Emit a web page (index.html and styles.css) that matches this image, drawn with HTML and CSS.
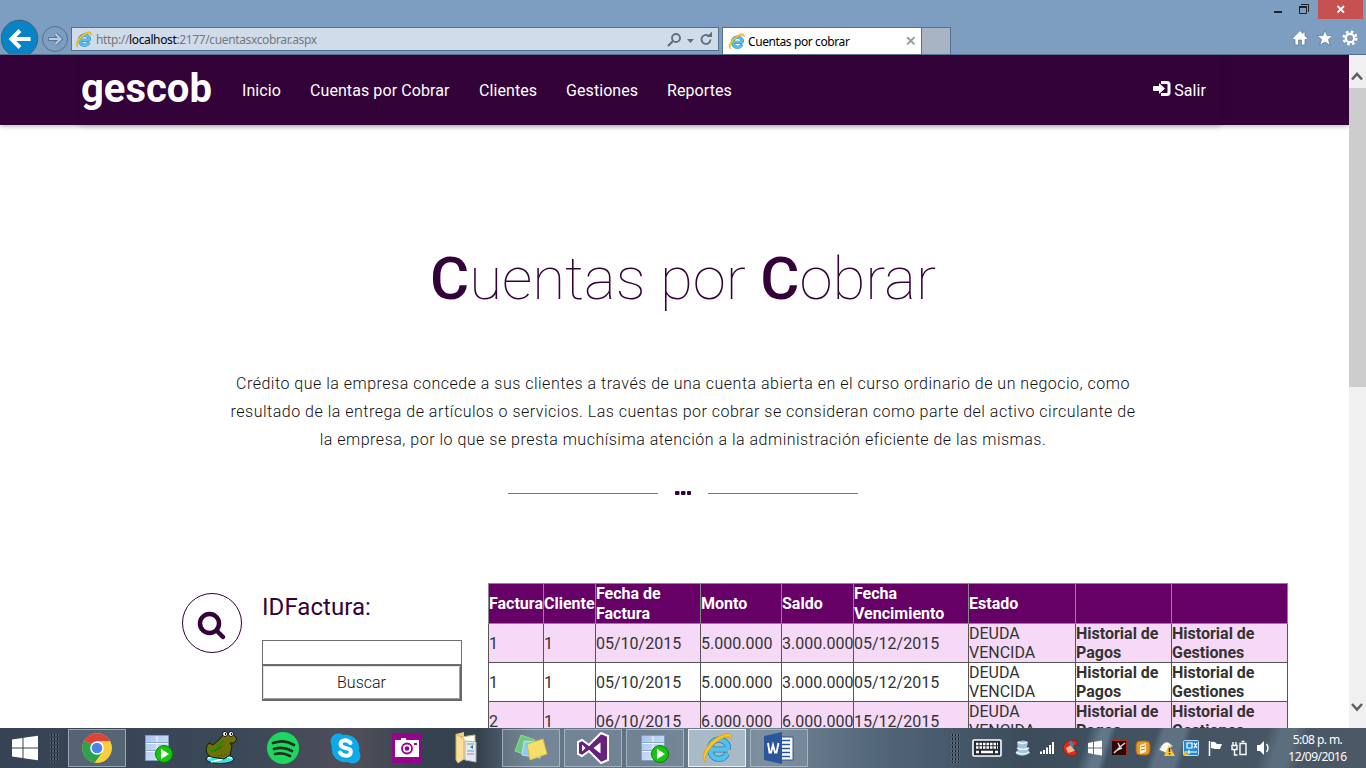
FILE: index.html
```html
<!DOCTYPE html>
<html lang="es">
<head>
<meta charset="utf-8">
<title>Cuentas por cobrar</title>
<link rel="stylesheet" href="styles.css">
</head>
<body>
<svg width="0" height="0" class="defs">
  <defs>
    <linearGradient id="sheet" x1="0" y1="0" x2="1" y2="1"><stop offset="0" stop-color="#a9c3ec"/><stop offset="1" stop-color="#dfe8f6"/></linearGradient>
    <symbol id="ie" viewBox="0 0 32 32">
      <path d="M27 17.500H10M26 21.500C23 28.500 12.500 29 9.500 20.500C7 10.500 14.500 6.500 20 8C25.500 9.500 27.500 13 27 17.500" fill="none" stroke="#217fb5" stroke-width="6"/>
      <path d="M27 17.500H10M26 21.500C23 28.500 12.500 29 9.500 20.500C7 10.500 14.500 6.500 20 8C25.500 9.500 27.500 13 27 17.500" fill="none" stroke="#56c0ec" stroke-width="4.600"/>
      <path d="M5 30.500C-3 26 7 9 19 4C25 .5 32 0 30.500 7.500C28.500 3.500 24 4.500 19 7.500C9 14 2.500 24 5 30.500Z" fill="#f8c421" stroke="#dc9d13" stroke-width=".8"/>
    </symbol>
    <symbol id="db" viewBox="0 0 30 30">
      <path d="M1.500 2.500h23v25h-23z" fill="url(#sheet)" stroke="#7c9bd0"/>
      <path d="M2 10.500h22M2 18.500h22M13 3v24" stroke="#f4f7fc"/><path d="M2 9.500h22M2 17.500h22" stroke="#8ba9d8"/>
      <circle cx="20" cy="21" r="8.500" fill="#16c60c" stroke="#0b7d08"/><path d="M17 15.800v10.400l8-5.200z" fill="#fff"/>
    </symbol>
  </defs>
</svg>

<header class="browser">
  <div class="caption">
    <div class="cap min"><svg width="10" height="19"><path d="M1 12h8" stroke="#222" stroke-width="2"/></svg></div>
    <div class="cap max"><svg width="12" height="19"><path d="M3 4.500h7.500V12" fill="none" stroke="#222"/><path d="M1.500 7.500h7v6h-7z" fill="none" stroke="#222"/><path d="M1 7h8" stroke="#222" stroke-width="2"/></svg></div>
    <div class="cap close"><svg width="10" height="19"><path d="M1.500 6l6.500 6.500M8 6l-6.500 6.500" stroke="#fff" stroke-width="1.800"/></svg></div>
  </div>
  <div class="tools">
    <svg class="back" width="38" height="35"><circle cx="18.500" cy="19.500" r="18.300" fill="#0784c7" stroke="#456078"/><path d="M29.500 20H12M19 11.500L10.500 20l8.500 8.500" fill="none" stroke="#fff" stroke-width="4"/></svg>
    <svg class="forward" width="28" height="35"><circle cx="14" cy="20" r="12.500" fill="none" stroke="#53708d"/><path d="M7 20h11.500M14.500 15l5 5-5 5" fill="none" stroke="#5a7797" stroke-width="4"/><path d="M8 20h11M14.500 15l5 5-5 5" fill="none" stroke="#b9cbe0" stroke-width="2"/></svg>
    <div class="address">
      <svg width="17" height="17"><use href="#ie"/></svg>
      <span class="url">http://<b>localhost</b>:2177/cuentasxcobrar.aspx</span>
      <svg width="50" height="20" class="addricons"><circle cx="11" cy="9" r="4" fill="none" stroke="#626e7b" stroke-width="1.800"/><path d="M8 12l-5 5" stroke="#626e7b" stroke-width="2.200"/><path d="M22 10h7l-3.500 4z" fill="#626e7b"/><path d="M45.500 10.500a4.500 4.500 0 1 1-2-3.800" fill="none" stroke="#626e7b" stroke-width="1.800"/><path d="M41.500 8l5.500 0V2.500z" fill="#626e7b"/></svg>
    </div>
    <div class="tab"><svg width="17" height="17"><use href="#ie"/></svg><span>Cuentas por cobrar</span><svg width="10" height="10"><path d="M1.200 1.200l7.200 7.200M8.400 1.200L1.200 8.400" stroke="#9d9d9d" stroke-width="2"/></svg></div>
    <div class="newtab"></div>
    <div class="favs">
      <svg width="16" height="16"><path d="M8 .6L.5 8.300l1 1.200H3V15h3.500v-5h3v5H13V9.500h1.500l1-1.200-2.500-2.500V2h-2v1.500z" fill="#fff" stroke="#587694" stroke-width=".7"/></svg>
      <svg width="18" height="16"><path d="M9 .3l2.100 5.300 6 .1-4.700 3.700 1.900 6L9 12l-5.300 3.400 1.900-6L.9 5.700l6-.1z" fill="#fff" stroke="#587694" stroke-width=".7"/></svg>
      <svg width="16" height="16"><circle cx="8" cy="8" r="4.200" fill="none" stroke="#fff" stroke-width="2.200"/><circle cx="8" cy="8" r="6.300" fill="none" stroke="#fff" stroke-width="2.500" stroke-dasharray="2.600 2.348"/></svg>
    </div>
  </div>
</header>

<div class="viewport">
  <div class="page">
    <nav class="nav">
      <div class="container">
        <a class="brand">gescob</a>
        <a class="n1">Inicio</a><a class="n2">Cuentas por Cobrar</a><a class="n3">Clientes</a><a class="n4">Gestiones</a><a class="n5">Reportes</a>
        <a class="exit"><svg width="18" height="16"><path d="M8 1.500h6Q16 1.500 16 3.500v8q0 2-2 2H8" fill="none" stroke="#fff" stroke-width="3"/><path d="M1 5h5V2l6 5.500L6 13v-3H1Q0 10 0 9V6q0-1 1-1z" fill="#fff"/></svg>Salir</a>
      </div>
    </nav>
    <h1><b>C</b>uentas por <b>C</b>obrar</h1>
    <div class="intro">
      <p>Crédito que la empresa concede a sus clientes a través de una cuenta abierta en el curso ordinario de un negocio, como</p>
      <p>resultado de la entrega de artículos o servicios. Las cuentas por cobrar se consideran como parte del activo circulante de</p>
      <p>la empresa, por lo que se presta muchísima atención a la administración eficiente de las mismas.</p>
    </div>
    <div class="divider"><i></i><svg width="16" height="4"><rect width="4.500" height="4" rx="1"/><rect x="6" width="4.500" height="4" rx="1"/><rect x="12" width="4" height="4" rx="1"/></svg><i></i></div>
    <div class="content">
      <div class="round"><svg width="30" height="30"><circle cx="12.500" cy="12.500" r="9.500" fill="none" stroke="#330239" stroke-width="4.500"/><path d="M19.500 19.500l6.500 6.500" stroke="#330239" stroke-width="4.500" stroke-linecap="round"/></svg></div>
      <div class="search"><h2>IDFactura:</h2><input type="text"><button>Buscar</button></div>
      <table>
        <colgroup><col class="c1"><col class="c2"><col class="c3"><col class="c4"><col class="c5"><col class="c6"><col class="c7"><col class="c8"><col class="c9"></colgroup>
        <tr><th>Factura</th><th>Cliente</th><th>Fecha de Factura</th><th>Monto</th><th>Saldo</th><th>Fecha Vencimiento</th><th>Estado</th><th></th><th></th></tr>
        <tr class="alt"><td>1</td><td>1</td><td>05/10/2015</td><td>5.000.000</td><td>3.000.000</td><td>05/12/2015</td><td>DEUDA VENCIDA</td><td><b>Historial de Pagos</b></td><td><b>Historial de Gestiones</b></td></tr>
        <tr><td>1</td><td>1</td><td>05/10/2015</td><td>5.000.000</td><td>3.000.000</td><td>05/12/2015</td><td>DEUDA VENCIDA</td><td><b>Historial de Pagos</b></td><td><b>Historial de Gestiones</b></td></tr>
        <tr class="alt"><td>2</td><td>1</td><td>06/10/2015</td><td>6.000.000</td><td>6.000.000</td><td>15/12/2015</td><td>DEUDA VENCIDA</td><td><b>Historial de Pagos</b></td><td><b>Historial de Gestiones</b></td></tr>
      </table>
    </div>
  </div>
  <div class="scroll">
    <svg width="17" height="33"><path d="M3 24.500l5-5.500 5 5.500" fill="none" stroke="#606060" stroke-width="2.600"/></svg>
    <div class="thumb"></div>
    <svg width="17" height="33" class="down"><path d="M3 9l5 5.500L13 9" fill="none" stroke="#606060" stroke-width="2.600"/></svg>
  </div>
</div>

<footer class="taskbar">
  <div class="start"><svg width="28" height="26"><path d="M1 4.500l10.500-1.500v9.500H1zM12.500 2.800L27 .8v11.700H12.500zM1 13.500h10.500V23L1 21.500zM12.500 13.500H27v11.700l-14.500-2z" fill="#fff"/></svg></div>
  <div class="grip"></div>
  <div class="apps">
    <div class="app open"><svg width="30" height="30" viewBox="0 0 30 30"><circle cx="15" cy="15" r="14.700" fill="#fbcf3c"/><path d="M15 15L2.300 7.600A14.700 14.700 0 0 0 13 29.600L21.500 18z" fill="#2ba24b"/><path d="M15 15L2.300 7.600A14.700 14.700 0 0 1 28.200 8.500H15z" fill="#db4437"/><path d="M15 8.300h13.100a14.700 14.700 0 0 1-15.200 21.300L21 18.500z" fill="#fbcf3c"/><circle cx="15" cy="15" r="6.800" fill="#fff"/><circle cx="15" cy="15" r="5.300" fill="#4a82ee"/></svg></div>
    <div class="app"><svg width="30" height="30"><use href="#db"/></svg></div>
    <div class="app"><svg width="34" height="34" viewBox="0 0 34 34"><ellipse cx="16" cy="28" rx="14" ry="4.500" fill="#32e6ee" stroke="#111"/><path d="M4 27l12-2 12 2M7 31l12-3" stroke="#fff" stroke-width="1.500"/><path d="M7 26Q0 22 3 15l2-3 4 2 8-7 3-5 9 1 4 5-3 4h-4l2 3-2 9-6 4z" fill="#6c7108" stroke="#171c03"/><path d="M6 20q8 0 9-6l5-4" stroke="#188c15" stroke-width="2" fill="none"/><path d="M11 20l8-5M14 25l9-2" stroke="#252903" stroke-dasharray="1 2"/><circle cx="21" cy="3" r="2.500" fill="#fff" stroke="#111"/><circle cx="27" cy="3" r="2.500" fill="#fff" stroke="#111"/><path d="M21 3h1M27 3h1" stroke="#111" stroke-width="2"/></svg></div>
    <div class="app"><svg width="32" height="32"><circle cx="16" cy="16" r="16" fill="#1ed760"/><path d="M6 11q11-4 21 2M7 17q9-3 18 2M8 22q8-2 15 2" fill="none" stroke="#19331f" stroke-width="2.700" stroke-linecap="round"/></svg></div>
    <div class="app"><svg width="31" height="31"><circle cx="15.500" cy="15.500" r="13.800" fill="#0caae9"/><circle cx="8.500" cy="8.500" r="8" fill="#0caae9"/><circle cx="22.500" cy="22.500" r="8" fill="#0caae9"/><path d="M20.500 10Q18.500 7.200 15 7.200C9 8 9.500 13.500 14.500 14.800C20.500 16 21.500 17 20.500 20.500C18.500 24 12 23 10 19.500" fill="none" stroke="#fff" stroke-width="4" stroke-linecap="round"/></svg></div>
    <div class="app"><svg width="30" height="30"><path d="M0 0h30v30H0z" fill="#96038c"/><path d="M3 7h6V5h5v2h13v17H3z" fill="#fff"/><circle cx="15" cy="15.500" r="5" fill="none" stroke="#96038c" stroke-width="1.800"/><circle cx="15" cy="15.500" r="2.300" fill="#96038c"/><path d="M22 11h3" stroke="#96038c" stroke-width="2"/></svg></div>
    <div class="app folder"><svg width="28" height="32"><path d="M3 2l8-2v24l-7 5H3z" fill="#f0d184"/><path d="M8 5l14-2v25l-14-1z" fill="#fffdf4" stroke="#d0b36a"/><path d="M12 9l11 1v20l-11-2z" fill="#e6ebf1" stroke="#aab3bc"/><path d="M14 12h7M14 19h7M14 22h7" stroke="#89939f"/><path d="M17 15l3-2v4z" fill="#168bac"/><path d="M3 2l8 5v20l-6 4-2-3z" fill="#f9df98" stroke="#d7b15d"/></svg></div>
    <div class="app open"><svg width="34" height="28"><path d="M7 1l14 5-6 16L1 17z" fill="#71c67d" stroke="#8bdd96"/><path d="M10 7l16 1v16l-18-3z" fill="#8fccf2" stroke="#bbe2f8"/><path d="M13 10l16-5 4 15-17 6z" fill="#f5df68" stroke="#d5b840"/></svg></div>
    <div class="app open"><svg width="34" height="32" viewBox="0 0 34 32"><path d="M2 10l4-2 7 5L25 1l7 3v24l-7 3-12-12-7 5-4-2z" fill="#68217a" stroke="#fff" stroke-width="2"/><path d="M6 12.500v7l3.500-3.500zM17.500 16l7-5.500v11z" fill="#fff"/></svg></div>
    <div class="app open"><svg width="30" height="30"><use href="#db"/></svg></div>
    <div class="app open active"><svg width="32" height="32"><use href="#ie"/></svg></div>
    <div class="app open"><svg width="32" height="32"><path d="M17 5h13v23H17z" fill="#fff" stroke="#2a5699"/><path d="M18 8.500h9M18 12.500h9M18 16.500h9M18 20.500h9M18 24.500h9" stroke="#2a5699" stroke-width="1.500"/><path d="M1 4l18-4v32L1 28z" fill="#2b579a"/><path d="M5 11l1.500 9.500H8l2-7.500 2 7.500h1.500L15.500 11" fill="none" stroke="#fff" stroke-width="1.900"/></svg></div>
  </div>
  <div class="grip right"></div>
  <div class="tray">
    <div class="kb"><svg width="30" height="18"><rect x="1" y="1" width="28" height="16" rx="1" fill="#222a33" stroke="#fff" stroke-width="1.600"/><path d="M4 5h22M4 8.500h22" stroke="#fff" stroke-width="2.500" stroke-dasharray="2.500 1"/><path d="M4 13h3M9 13h12M23 13h3" stroke="#fff" stroke-width="2.500"/></svg></div>
    <svg width="24" height="18"><path d="M6 3q7-3 11 0l-1 5 3 6q-7 5-14 1l2-5z" fill="#9fc4db"/><path d="M7 3q5 3 9 0M6 9q6 3 12 0M5 13q7 4 13 0" stroke="#e9f7ff" fill="none" stroke-width="1.500"/></svg>
    <svg width="24" height="18"><path d="M5 12.500h2V15H5zM8 11h2v4H8zM11 8.500h2V15h-2zM14 6h2v9h-2zM17 3h2v12h-2z" fill="#fff"/></svg>
    <svg width="24" height="18"><path d="M18 2Q7-1 4 8q1 10 11 9l4-4-7-1-2-5 8-1z" fill="#d92e1d" stroke="#941c12"/><path d="M7 9l5-3 4 6-7 2z" fill="#eeb48d"/><path d="M11 1l4 4-1 4-4-4z" fill="#4383b8"/></svg>
    <svg width="24" height="18"><path d="M5 4l5-1v5.500H5zM11 2.800l8-1.300v7h-8zM5 9.500h5V15l-5-1zM11 9.500h8v7l-8-1.300z" fill="#fff"/></svg>
    <svg width="24" height="18"><path d="M4.500 1.500h15v15h-15z" fill="#2b0706" stroke="#b2291c"/><path d="M11 4l2 4-6 6M13 8l5-4M10 11l5-2" stroke="#ddd" fill="none" stroke-width="1.500"/></svg>
    <svg width="24" height="18"><rect x="5" y="2" width="14" height="14" rx="4" fill="#e79828" stroke="#a9600d"/><path d="M9 6l6-2v9l-6 2z" fill="#fff3d1"/><path d="M10 8l4-1M10 11l4-1" stroke="#c47812"/></svg>
    <svg width="24" height="18"><path d="M4 11Q8 2 13 3l5 4-4 2-3 5z" fill="#f8f8f8" stroke="#888"/><path d="M14 6l6 11H9z" fill="#ffca28"/><path d="M14.500 9v4M14.500 14v1.500" stroke="#322" stroke-width="1.500"/></svg>
    <svg width="24" height="18"><rect x="4.500" y="1.500" width="15" height="15" rx="1" fill="#248ad1" stroke="#b8ddf5"/><path d="M8 4h5v5H8zM15 4l3 5M18 4l-3 5M6 13h12M10 11v4" fill="none" stroke="#fff" stroke-width="1.200"/><path d="M5 12l5 4H5z" fill="#f1bb24"/></svg>
    <svg width="24" height="18"><path d="M6.500 2v15" stroke="#fff" stroke-width="1.500"/><path d="M8 3q4-1 6 2h5l-2 5h-5l-4-1z" fill="#fff"/></svg>
    <svg width="24" height="18"><path d="M13 4.500h6v11h-6zM14.500 2.500h3M5 6.500h5v4H5zM6 3v3M9 3v3M7.500 10v6h3" fill="none" stroke="#fff" stroke-width="1.400"/></svg>
    <svg width="24" height="18"><path d="M6 6h3l4-4v14l-4-4H6z" fill="#fff"/><path d="M15.500 5q3 4 0 8" fill="none" stroke="#fff" stroke-width="1.400"/></svg>
  </div>
  <div class="clock"><span>5:08 p. m.</span><span>12/09/2016</span></div>
</footer>
</body>
</html>
```
FILE: styles.css
```css
* { box-sizing: border-box; }
body { margin: 0; width: 1366px; height: 768px; overflow: hidden; display: flex; flex-direction: column; font-family: Roboto, sans-serif; background: #fff; }
svg { display: block; flex: none; }
.defs { position: absolute; }
h1, h2, p { margin: 0; font-weight: inherit; }

.browser { height: 55px; flex: none; background: #7d9dc1; border-bottom: 1px solid #56728c; font-family: "Noto Sans", sans-serif; }
.caption { height: 19px; display: flex; justify-content: flex-end; padding-right: 3px; }
.cap { display: flex; justify-content: center; }
.min { width: 27px; }
.max { width: 26px; margin-right: 1px; }
.close { width: 45px; background: #c75050; }
.tools { height: 35px; display: flex; padding-left: 1px; }
.forward { margin: 0 0 0 2px; }
.address { width: 648px; height: 24px; margin: 8px 0 0 2px; border: 1px solid #53708d; background: #d0dcea; display: flex; align-items: center; padding-left: 3px; }
.url { margin-left: 4px; font-size: 12px; color: #74777b; flex: 1; white-space: nowrap; letter-spacing: -.37px; }
.url b { font-weight: 400; color: #000; }
.addricons { margin-right: 3px; }
.tab { width: 200px; height: 27px; margin: 8px 0 0 3px; border: 1px solid #53708d; border-bottom: 0; background: #fff; display: flex; align-items: center; padding: 0 5px; font-size: 12px; color: #000; letter-spacing: -.4px; }
.tab span { flex: 1; margin-left: 3px; white-space: nowrap; }
.newtab { width: 29px; height: 27px; margin-top: 8px; border: 1px solid #53708d; border-left: 0; border-bottom: 0; background: #a8b3c4; }
.favs { display: flex; gap: 8px; margin: 11px 8px 0 auto; }

.viewport { height: 673px; flex: none; display: flex; overflow: hidden; }
.page { width: 1349px; overflow: hidden; }
.nav { height: 70px; background: #330239; box-shadow: 0 1px 5px rgba(0,0,0,.3); padding-left: 80px; }
.container { width: 1140px; height: 70px; display: flex; align-items: center; box-shadow: 0 1px 6px rgba(0,0,0,.18); color: #fff; font-size: 16px; font-weight: 400; letter-spacing: .08px; padding-left: 1px; }
.nav a { white-space: nowrap; }
.nav .brand { font-size: 40px; font-weight: 700; width: 161px; padding: 0 0 4px; letter-spacing: 0; }
.n1 { width: 68px; }
.n2 { width: 169px; }
.n3 { width: 87px; }
.n4 { width: 101px; }
.nav .exit { margin-left: auto; margin-right: 14px; display: flex; gap: 3px; }

h1 { margin-top: 118px; height: 72px; line-height: 72px; font-size: 60px; font-weight: 100; color: #330239; text-align: center; padding-left: 17px; white-space: nowrap; }
h1 b { font-weight: 500; }
.intro { margin-top: 55px; padding-left: 17px; text-align: center; font-size: 16px; line-height: 28px; font-weight: 300; color: #111; white-space: nowrap; letter-spacing: .5px; }
.divider { display: flex; justify-content: center; align-items: center; gap: 17px; margin: 35px 0 0 17px; height: 8px; fill: #330239; }
.divider i { width: 150px; height: 1px; background: #777; margin-top: 1px; }
.divider svg { margin-top: -1px; }
.content { display: flex; margin-top: 86px; padding-left: 182px; align-items: flex-start; }
.round { width: 60px; height: 60px; margin-top: 10px; border: 1px solid #330239; border-radius: 50%; display: flex; padding: 17px 0 0 14px; }
.search { width: 200px; margin: 9px 26px 0 20px; display: flex; flex: none; flex-direction: column; }
.search h2 { font-size: 24px; line-height: 30px; height: 48px; color: #330239; letter-spacing: .05px; }
.search input { width: 200px; height: 25px; border: 1px solid #707070; margin: 0; }
.search button { height: 36px; border: 1px solid #686868; border-right-width: 2px; border-bottom-width: 2px; background: #fff; box-shadow: inset 1px 1px #e3e3e3, inset -1px -1px #a0a0a0; font: 300 16px Roboto, sans-serif; color: #111; padding: 0; }
table { table-layout: fixed; width: 799px; flex: none; border-collapse: collapse; color: #333; font-size: 16px; line-height: 19px; }
th, td { border: 1px solid #555; padding: 0; text-align: left; vertical-align: middle; height: 39px; }
th { height: 39px; line-height: 20px; background: #660066; color: #fff; border-color: #888; font-weight: 700; }
tr:first-child th { line-height: 19.5px; }
td b { font-weight: 700; }
.alt { background: #f5d9f7; }
.c1 { width: 55px; } .c2 { width: 52px; } .c3 { width: 105px; } .c4 { width: 81px; } .c5 { width: 72px; }
.c6 { width: 115px; } .c7 { width: 107px; } .c8 { width: 96px; } .c9 { width: 116px; }
.scroll { width: 17px; background: #f0f0f0; display: flex; flex-direction: column; }
.thumb { height: 299px; background: #cdcdcd; }
.down { margin-top: auto; }

.taskbar { height: 40px; flex: none; display: flex; align-items: center; background: linear-gradient(108deg, transparent 0 79%, #62788a 80% 80.500%, transparent 81% 84%, #5d7182 84.500% 86%, transparent 86.500% 92%, #5b6e7e 93% 94%, transparent 95%), linear-gradient(90deg, #354354, #3b4858 18%, #504f59 26%, #354250 31%, #35414d 35%, #64798b 39%, #5e7182 47%, #718696 56%, #53677a 64%, #475b6d 69%, #3c4c5a 75%, #425363 85%, #4c5966 100%); }
.start { width: 50px; padding-left: 11px; }
.grip { width: 9px; height: 30px; margin-right: 7px; background: radial-gradient(circle, #161c24 0 .8px, #8792a0 1px, transparent 1.200px) 0 0 / 3px 4px; }
.apps { display: flex; }
.app { width: 58px; height: 38px; margin: 0 2px; border: 1px solid transparent; display: flex; align-items: center; justify-content: center; }
.folder { padding-right: 4px; }
.open { background: rgba(150,165,180,.33); border-color: rgba(190,203,214,.65); }
.active { background: #a8bac8; border-color: #e9f0f5; }
.right { margin-left: 141px; margin-right: 0; }
.tray { display: flex; align-items: center; }
.kb { width: 51px; padding-left: 12px; }
.clock { flex: 1; color: #fff; font: 12px/17px "Noto Sans", sans-serif; display: flex; flex-direction: column; align-items: center; letter-spacing: -.55px; white-space: nowrap; padding: 0 6px 0 0; }
```
